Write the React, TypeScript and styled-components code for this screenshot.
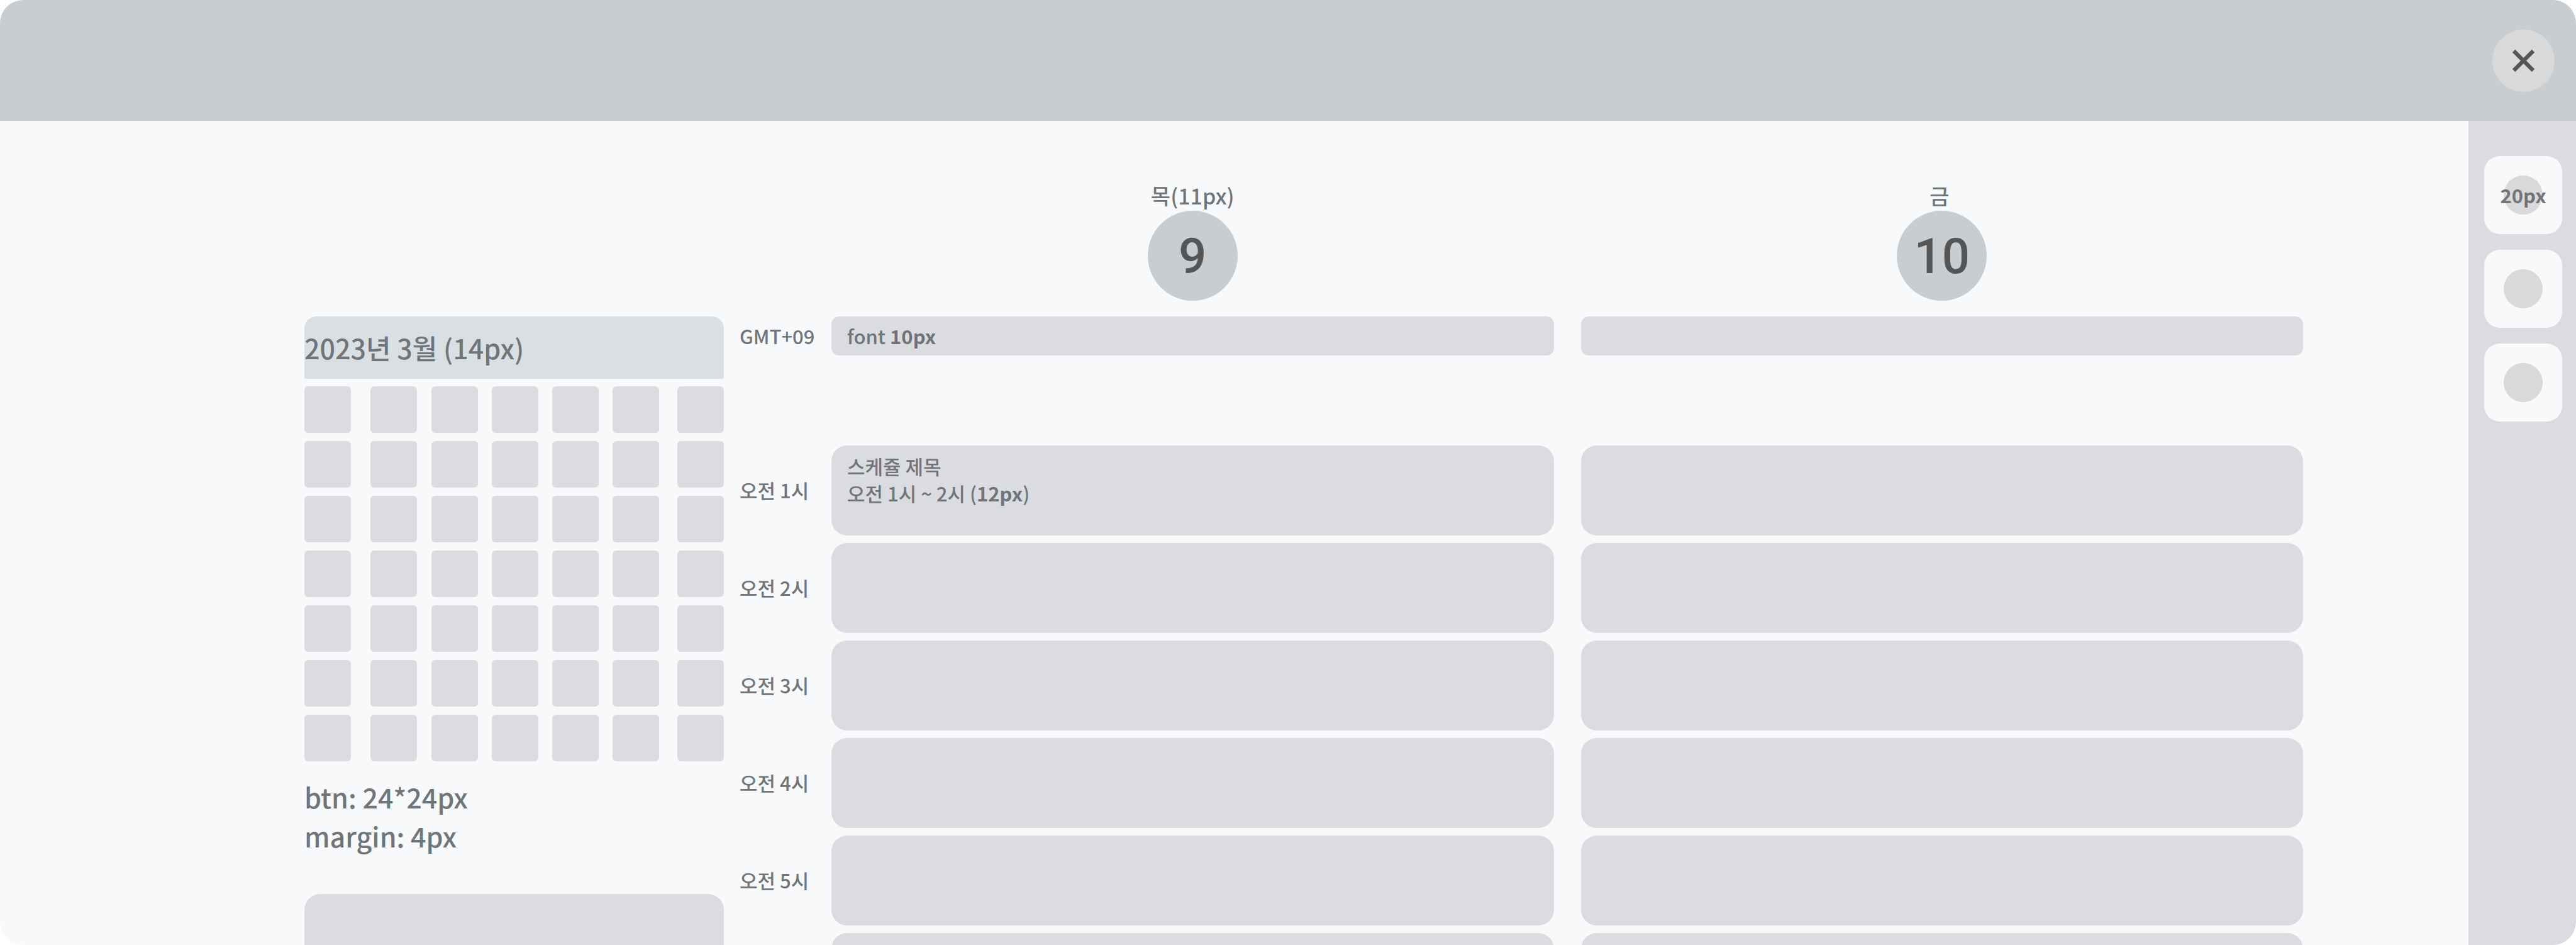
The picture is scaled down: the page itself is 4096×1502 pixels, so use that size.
import React from "react";
import styled, { createGlobalStyle } from "styled-components";

const color = {
  header: "#c8cdd1",
  surface: "#f8f9fb",
  block: "#dadce0",
  month: "#dadfe3",
  dot: "#d9d9d9",
  text: "#70757a",
  strong: "#555555",
};

const GlobalStyle = createGlobalStyle`
  *, *::before, *::after { box-sizing: border-box; }
  body {
    margin: 0;
    background: #ffffff;
    color: ${color.text};
    font-family: "Noto Sans CJK KR", "Noto Sans", sans-serif;
    font-size: 31px;
    font-weight: 500;
    line-height: 43px;
  }
  h1, h2, h3, p { margin: 0; font: inherit; }
  button {
    border: 0;
    padding: 0;
    color: inherit;
    font: inherit;
    cursor: pointer;
  }
`;

const Page = styled.div`
  display: flex;
  flex-direction: column;
  height: 100vh;
  overflow: hidden;
  border-radius: 37px;
  background: ${color.surface};
`;

const Header = styled.header`
  display: flex;
  flex: none;
  align-items: center;
  justify-content: flex-end;
  height: 192px;
  padding-right: 34px;
  background: ${color.header};
`;

const CloseButton = styled.button`
  display: grid;
  place-items: center;
  width: 99px;
  height: 99px;
  border-radius: 50%;
  background: ${color.dot};
  color: ${color.strong};
`;

const Body = styled.div`
  display: flex;
  flex: 1;
  min-height: 0;
`;

const Main = styled.main`
  display: flex;
  flex: 1;
  gap: 25px;
  min-width: 0;
  padding: 95px 263px 0 484px;
  overflow: hidden;
`;

const CalendarPanel = styled.aside`
  display: flex;
  flex: none;
  flex-direction: column;
  width: 667px;
  padding-top: 216px;
`;

const MonthTitle = styled.h1`
  display: flex;
  flex: none;
  align-items: center;
  height: 99px;
  padding-bottom: 2px;
  border-radius: 19px 19px 0 0;
  background: ${color.month};
  font-size: 43px;
  line-height: 62px;
`;

const DateGrid = styled.div`
  display: grid;
  grid-template-columns: 34fr repeat(4, 31fr) 33fr 24fr;
  row-gap: 13px;
  padding: 12px 0 25px;
`;

const DateButton = styled.button`
  width: 74px;
  height: 74px;
  border-radius: 6px;
  background: ${color.block};
`;

const Notes = styled.p`
  font-size: 43px;
  line-height: 62px;
`;

const CalendarCard = styled.section`
  flex: 1;
  margin-top: 62px;
  border-radius: 25px 25px 0 0;
  background: ${color.block};
`;

const Schedule = styled.section`
  flex: 1;
  min-width: 0;
`;

const Row = styled.div<{ $after?: number }>`
  display: grid;
  grid-template-columns: 103px 1fr 1fr;
  column-gap: 43px;
  align-items: center;
  margin-bottom: ${({ $after = 12 }) => $after}px;
`;

const DayHeading = styled.h2`
  display: flex;
  flex-direction: column;
  align-items: center;
`;

const DayName = styled.span`
  font-size: 34px;
  line-height: 48px;
  white-space: pre;
`;

const DayNumber = styled.span`
  display: grid;
  place-items: center;
  width: 143px;
  height: 143px;
  padding-top: 2px;
  border-radius: 50%;
  background: ${color.header};
  color: ${color.strong};
  font-family: Roboto, sans-serif;
  font-size: 78px;
  font-weight: 500;
  line-height: 92px;
`;

const TimeLabel = styled.span`
  padding-bottom: 2px;
  white-space: nowrap;
`;

const AllDaySlot = styled.div`
  display: flex;
  align-items: center;
  height: 62px;
  padding: 0 25px 2px;
  border-radius: 12px;
  background: ${color.block};
  white-space: pre;
`;

const HourSlot = styled.div`
  height: 143px;
  padding: 11px 25px;
  border-radius: 25px;
  background: ${color.block};
`;

const Rail = styled.nav`
  display: flex;
  flex: none;
  flex-direction: column;
  gap: 25px;
  width: 171px;
  padding: 56px 22px 0 25px;
  background: ${color.block};
`;

const RailButton = styled.button`
  display: grid;
  flex: none;
  place-items: center;
  width: 124px;
  height: 124px;
  border-radius: 25px;
  background: ${color.surface};
`;

const RailDot = styled.span`
  display: flex;
  align-items: center;
  justify-content: center;
  width: 62px;
  height: 62px;
  padding-bottom: 2px;
  border-radius: 50%;
  background: ${color.dot};
  font-weight: 700;
  white-space: nowrap;
`;

const days = [
  { name: "목(11px)", number: 9 },
  { name: "금 ", number: 10 },
];
const hours = [1, 2, 3, 4, 5, 6];
const dates = Array.from({ length: 49 }, (_, i) => i + 1);
const railItems = ["20px", "", ""];

const CloseIcon = () => (
  <svg
    width="37"
    height="37"
    viewBox="0 0 48 48"
    fill="none"
    stroke="currentColor"
    strokeWidth="8.2"
    aria-hidden="true"
  >
    <path d="M4 4 44 44M44 4 4 44" />
  </svg>
);

export default function App() {
  return (
    <>
      <GlobalStyle />
      <Page>
        <Header>
          <CloseButton type="button" aria-label="닫기">
            <CloseIcon />
          </CloseButton>
        </Header>
        <Body>
          <Main>
            <CalendarPanel>
              <MonthTitle>2023년 3월 (14px)</MonthTitle>
              <DateGrid>
                {dates.map((date) => (
                  <DateButton key={date} type="button" aria-label={`날짜 ${date}`} />
                ))}
              </DateGrid>
              <Notes>
                btn: 24*24px
                <br />
                margin: 4px
              </Notes>
              <CalendarCard />
            </CalendarPanel>
            <Schedule>
              <Row $after={25}>
                <span />
                {days.map((day) => (
                  <DayHeading key={day.number}>
                    <DayName>{day.name}</DayName>
                    <DayNumber>{day.number}</DayNumber>
                  </DayHeading>
                ))}
              </Row>
              <Row $after={143}>
                <TimeLabel>GMT+09</TimeLabel>
                <AllDaySlot>
                  font <b>10px</b>
                </AllDaySlot>
                <AllDaySlot />
              </Row>
              {hours.map((hour) => (
                <Row key={hour}>
                  {hour < 6 ? <TimeLabel>오전 {hour}시</TimeLabel> : <span />}
                  <HourSlot>
                    {hour === 1 && (
                      <>
                        <h3>스케쥴 제목</h3>
                        <p>
                          오전 1시 ~ 2시 (<b>12px</b>)
                        </p>
                      </>
                    )}
                  </HourSlot>
                  <HourSlot />
                </Row>
              ))}
            </Schedule>
          </Main>
          <Rail>
            {railItems.map((label, i) => (
              <RailButton key={i} type="button" aria-label={label || `메뉴 ${i + 1}`}>
                <RailDot>{label}</RailDot>
              </RailButton>
            ))}
          </Rail>
        </Body>
      </Page>
    </>
  );
}
